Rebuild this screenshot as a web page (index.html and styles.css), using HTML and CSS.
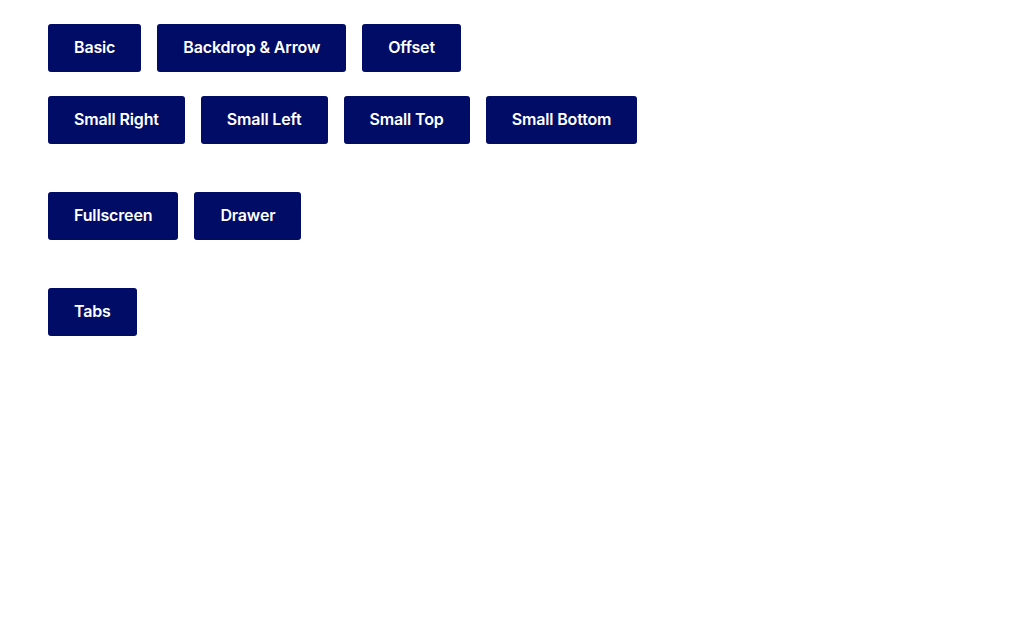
FILE: index.html
```html
<!DOCTYPE html>
<html>
<head>
<meta charset="utf-8">
<link rel="stylesheet" href="styles.css">
</head>
<body>
<main class="page">
  <section class="group">
    <div class="row">
      <button class="btn">Basic</button>
      <button class="btn">Backdrop &amp; Arrow</button>
      <button class="btn">Offset</button>
    </div>
    <div class="row">
      <button class="btn">Small Right</button>
      <button class="btn">Small Left</button>
      <button class="btn">Small Top</button>
      <button class="btn">Small Bottom</button>
    </div>
  </section>
  <section class="group">
    <div class="row">
      <button class="btn">Fullscreen</button>
      <button class="btn">Drawer</button>
    </div>
  </section>
  <section class="group">
    <div class="row">
      <button class="btn">Tabs</button>
    </div>
  </section>
</main>
</body>
</html>
```
FILE: styles.css
```css
html, body {
  margin: 0;
  padding: 0;
  background: #ffffff;
}
.page {
  display: flex;
  flex-direction: column;
  gap: 48px;
  padding: 24px 48px;
}
.group {
  display: flex;
  flex-direction: column;
  gap: 24px;
}
.row {
  display: flex;
  gap: 16px;
}
.btn {
  height: 48px;
  padding: 0 26px 2px;
  border: none;
  border-radius: 3px;
  background: #000c66;
  color: #ffffff;
  font-family: Inter, "Liberation Sans", sans-serif;
  font-weight: 600;
  font-size: 16px;
  letter-spacing: -0.15px;
  line-height: 1;
  cursor: pointer;
}
```
